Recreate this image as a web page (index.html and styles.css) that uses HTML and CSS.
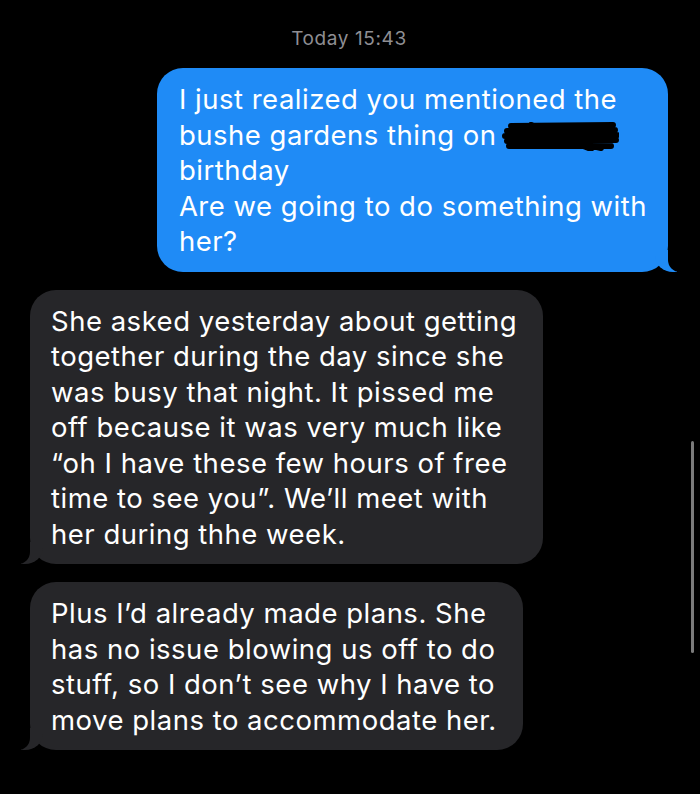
FILE: index.html
```html
<!DOCTYPE html>
<html lang="en">
<head>
  <meta charset="UTF-8">
  <meta name="viewport" content="width=device-width, initial-scale=1.0">
  <title>Messages</title>
  <link rel="stylesheet" href="styles.css">
</head>
<body>
  <main class="thread">
    <p class="stamp">Today 15:43</p>

    <!-- Sent -->
    <div class="bubble sent">
      I just realized you mentioned the<br>
      bushe gardens thing on <svg class="redact" viewBox="0 0 118 30" aria-hidden="true">
        <path d="M10 5 L112 4 M6 10 L114 9 M4 15 L116 14 M6 20 L115 19 M8 25 L110 25 M14 7 L100 27 M30 4 L90 28" />
      </svg><br>
      birthday<br>
      Are we going to do something with<br>
      her?
    </div>

    <!-- Received -->
    <div class="bubble received">
      She asked yesterday about getting<br>
      together during the day since she<br>
      was busy that night. It pissed me<br>
      off because it was very much like<br>
      “oh I have these few hours of free<br>
      time to see you”. We’ll meet with<br>
      her during thhe week.
    </div>

    <div class="bubble received">
      Plus I’d already made plans. She<br>
      has no issue blowing us off to do<br>
      stuff, so I don’t see why I have to<br>
      move plans to accommodate her.
    </div>
  </main>

  <div class="scrollbar"></div>
</body>
</html>
```

FILE: styles.css
```css
/* Global */
body {
  margin: 0;
  background: #000;
  font-family: Inter, 'Noto Sans', sans-serif;
  color: #fff;
}

.thread {
  display: flex;
  flex-direction: column;
  padding: 28px 32px 0 30px;
}

.stamp {
  margin: 0 0 18px;
  text-align: center;
  font-size: 19px;
  line-height: 22px;
  letter-spacing: 0.6px;
  color: #8e8e93;
}

/* Bubbles */
.bubble {
  position: relative;
  width: fit-content;
  padding: 14px 21px 12px 21px;
  border-radius: 26px;
  font-size: 27.5px;
  line-height: 35.5px;
  letter-spacing: 0.5px;
  white-space: nowrap;
  margin-bottom: 18px;
}
.bubble::before,
.bubble::after {
  content: "";
  position: absolute;
  bottom: 0;
  height: 22px;
}

.sent {
  align-self: flex-end;
  padding-left: 22px;
  background: #1f8bf6;
}
.sent::before {
  right: -9px;
  width: 22px;
  background: #1f8bf6;
  border-bottom-left-radius: 18px 16px;
}
.sent::after {
  right: -14px;
  width: 14px;
  background: #000;
  border-bottom-left-radius: 12px;
}

.received {
  align-self: flex-start;
  padding-right: 26px;
  background: #262629;
}
.received::before {
  left: -9px;
  width: 22px;
  background: #262629;
  border-bottom-right-radius: 18px 16px;
}
.received::after {
  left: -14px;
  width: 14px;
  background: #000;
  border-bottom-right-radius: 12px;
}

.redact {
  width: 118px;
  height: 30px;
  vertical-align: -6px;
  margin-left: -4px;
}
.redact path {
  fill: none;
  stroke: #000;
  stroke-width: 6;
  stroke-linecap: round;
}

/* Scroll indicator */
.scrollbar {
  position: absolute;
  top: 441px;
  right: 6px;
  width: 3px;
  height: 212px;
  border-radius: 2px;
  background: #7b7b7b;
}
```
